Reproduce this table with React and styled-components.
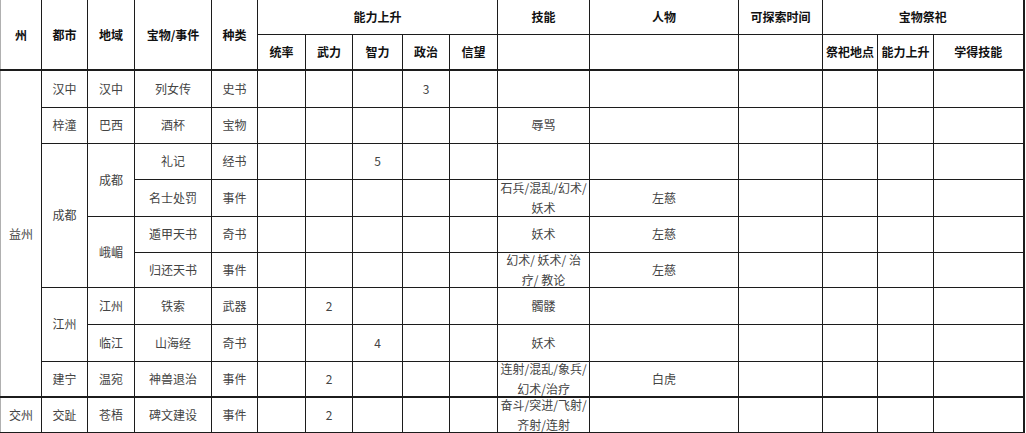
import React from 'react';
import styled, { createGlobalStyle } from 'styled-components';

const GlobalStyle = createGlobalStyle`
  html, body {
    margin: 0;
    padding: 0;
    background: #fff;
  }
  body {
    font-family: "Noto Sans CJK SC", "Noto Sans", sans-serif;
  }
`;

const Page = styled.div`
  width: 1026px;
  height: 433px;
  overflow: hidden;
  background: #fff;
`;

const Sheet = styled.table`
  border-collapse: collapse;
  table-layout: fixed;
  width: 1024px;
  font-size: 12px;
  color: #444;
`;

const Col = styled.col`
  width: ${(p) => p.$w}px;
`;

const Row = styled.tr`
  height: ${(p) => p.$h}px;
`;

const Head = styled.th`
  padding: 0;
  font-weight: bold;
  color: #111;
  text-align: center;
  vertical-align: middle;
  border: 1px solid #1c1c1c;
  border-top: none;
  border-bottom-width: ${(p) => (p.$low ? 2 : 1)}px;
  &:first-child {
    border-left-color: #b0b0b0;
  }
  &:last-child {
    border-right-width: 2px;
  }
`;

const Cell = styled.td`
  padding: 0;
  text-align: center;
  vertical-align: middle;
  line-height: 20px;
  border: 1px solid #1c1c1c;
  border-top-width: ${(p) => (p.$split ? 2 : 1)}px;
  border-bottom-width: ${(p) => (p.$end ? 2 : 1)}px;
  &:last-child {
    border-right-width: 2px;
  }
`;

const EdgeCell = styled(Cell)`
  border-left-color: #b0b0b0;
`;

const Multi = styled.div`
  height: 30px;
  display: flex;
  flex-direction: column;
  justify-content: center;
  align-items: center;
  white-space: nowrap;
`;

const widths = [41, 46, 47, 77, 46, 48, 47, 50, 47, 48, 92, 149, 84, 55, 56, 90];
const heights = [37, 36, 36, 37, 36, 35, 37, 37, 36, 36];

// 统率 武力 智力 政治 信望 技能 人物 可探索时间 祭祀地点 能力上升 学得技能
function Rest({ stat = {}, skill, person, split, end }) {
  const keys = ['ts', 'wl', 'zl', 'zz', 'xw'];
  return (
    <>
      {keys.map((k) => (
        <Cell key={k} $split={split} $end={end}>{stat[k] || ''}</Cell>
      ))}
      <Cell $split={split} $end={end}>
        {Array.isArray(skill) ? (
          <Multi>
            {skill.map((line) => (
              <span key={line}>{line}</span>
            ))}
          </Multi>
        ) : (
          skill || ''
        )}
      </Cell>
      <Cell $split={split} $end={end}>{person || ''}</Cell>
      <Cell $split={split} $end={end} />
      <Cell $split={split} $end={end} />
      <Cell $split={split} $end={end} />
      <Cell $split={split} $end={end} />
    </>
  );
}

export default function App() {
  return (
    <Page>
      <GlobalStyle />
      <Sheet>
        <colgroup>
          {widths.map((w, i) => (
            <Col key={i} $w={w} />
          ))}
        </colgroup>
        <thead>
          <Row $h={34}>
            <Head rowSpan={2} $low>州</Head>
            <Head rowSpan={2} $low>都市</Head>
            <Head rowSpan={2} $low>地域</Head>
            <Head rowSpan={2} $low>宝物/事件</Head>
            <Head rowSpan={2} $low>种类</Head>
            <Head colSpan={5}>能力上升</Head>
            <Head>技能</Head>
            <Head>人物</Head>
            <Head>可探索时间</Head>
            <Head colSpan={3}>宝物祭祀</Head>
          </Row>
          <Row $h={36}>
            <Head $low>统率</Head>
            <Head $low>武力</Head>
            <Head $low>智力</Head>
            <Head $low>政治</Head>
            <Head $low>信望</Head>
            <Head $low />
            <Head $low />
            <Head $low />
            <Head $low>祭祀地点</Head>
            <Head $low>能力上升</Head>
            <Head $low>学得技能</Head>
          </Row>
        </thead>
        <tbody>
          <Row $h={heights[0]}>
            <EdgeCell rowSpan={9}>益州</EdgeCell>
            <Cell>汉中</Cell>
            <Cell>汉中</Cell>
            <Cell>列女传</Cell>
            <Cell>史书</Cell>
            <Rest stat={{ zz: '3' }} />
          </Row>
          <Row $h={heights[1]}>
            <Cell>梓潼</Cell>
            <Cell>巴西</Cell>
            <Cell>酒杯</Cell>
            <Cell>宝物</Cell>
            <Rest skill="辱骂" />
          </Row>
          <Row $h={heights[2]}>
            <Cell rowSpan={4}>成都</Cell>
            <Cell rowSpan={2}>成都</Cell>
            <Cell>礼记</Cell>
            <Cell>经书</Cell>
            <Rest stat={{ zl: '5' }} />
          </Row>
          <Row $h={heights[3]}>
            <Cell>名士处罚</Cell>
            <Cell>事件</Cell>
            <Rest skill={['石兵/混乱/幻术/', '妖术']} person="左慈" />
          </Row>
          <Row $h={heights[4]}>
            <Cell rowSpan={2}>峨嵋</Cell>
            <Cell>遁甲天书</Cell>
            <Cell>奇书</Cell>
            <Rest skill="妖术" person="左慈" />
          </Row>
          <Row $h={heights[5]}>
            <Cell>归还天书</Cell>
            <Cell>事件</Cell>
            <Rest skill={['幻术/ 妖术/ 治', '疗/ 教论']} person="左慈" />
          </Row>
          <Row $h={heights[6]}>
            <Cell rowSpan={2}>江州</Cell>
            <Cell>江州</Cell>
            <Cell>铁索</Cell>
            <Cell>武器</Cell>
            <Rest stat={{ wl: '2' }} skill="髑髅" />
          </Row>
          <Row $h={heights[7]}>
            <Cell>临江</Cell>
            <Cell>山海经</Cell>
            <Cell>奇书</Cell>
            <Rest stat={{ zl: '4' }} skill="妖术" />
          </Row>
          <Row $h={heights[8]}>
            <Cell>建宁</Cell>
            <Cell>温宛</Cell>
            <Cell>神兽退治</Cell>
            <Cell>事件</Cell>
            <Rest stat={{ wl: '2' }} skill={['连射/混乱/象兵/', '幻术/治疗']} person="白虎" />
          </Row>
          <Row $h={heights[9]}>
            <EdgeCell $split $end>交州</EdgeCell>
            <Cell $split $end>交趾</Cell>
            <Cell $split $end>苍梧</Cell>
            <Cell $split $end>碑文建设</Cell>
            <Cell $split $end>事件</Cell>
            <Rest stat={{ wl: '2' }} skill={['奋斗/突进/飞射/', '齐射/连射']} split end />
          </Row>
        </tbody>
      </Sheet>
    </Page>
  );
}
